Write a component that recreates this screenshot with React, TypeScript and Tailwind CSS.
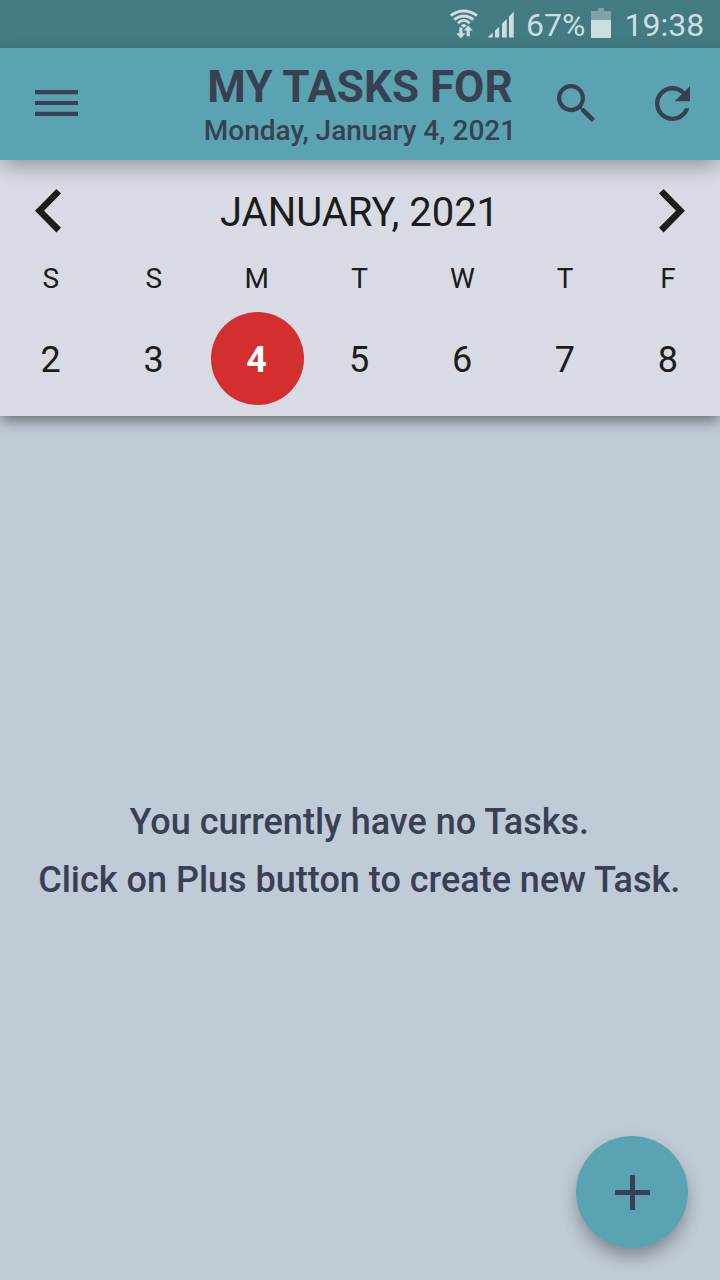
import React from "react";

const days = [
  { letter: "S", date: 2 },
  { letter: "S", date: 3 },
  { letter: "M", date: 4 },
  { letter: "T", date: 5 },
  { letter: "W", date: 6 },
  { letter: "T", date: 7 },
  { letter: "F", date: 8 },
];
const selectedDate = 4;

function WifiIcon() {
  return (
    <svg className="ml-[449px] h-[30px] w-[30px] shrink-0" viewBox="0 0 30 30" fill="none" stroke="#cddde0">
      <path d="M1.6 6.6Q14.8-2.6 28 6.6" strokeWidth="2.8" />
      <path d="M5.2 10.6Q14.8 3.4 24.4 10.6" strokeWidth="2.8" />
      <path d="M8.9 14.3Q14.8 8.6 20.7 14.3" strokeWidth="2.7" />
      <path d="M11.8 16.6Q14.8 13.6 17.8 16.6L14.8 18.8Z" fill="#cddde0" stroke="none" />
      <path d="M10.3 18.4h3.2v5.8h2.9L11.9 29.4l-4.7-5.2h3.1zM17.6 27.2h3.2v-5.6h3l-4.6-5.2-4.5 5.2h2.9z" fill="#cddde0" stroke="none" />
    </svg>
  );
}

function SignalIcon() {
  return (
    <svg className="ml-[8px] h-[28px] w-[28px] shrink-0" viewBox="0 0 28 28" fill="#cddde0">
      <path d="M.5 26.5 5.8 21.5v5zM8 19.7l4.2-4.2v11H8zM15 12.7l4.8-4.9v18.7H15zM22 5.5l4.7-5v26H22z" />
    </svg>
  );
}

function BatteryIcon() {
  return (
    <svg className="h-[30px] w-5 shrink-0" viewBox="0 0 20 30">
      <path d="M7 0h6v3h7v9H0V3h7z" fill="#7da3a9" />
      <path d="M0 12h20v18H0z" fill="#cddde0" />
    </svg>
  );
}

function StatusBar() {
  return (
    <div className="flex h-12 items-start bg-[#437b83] text-[32px] leading-[48px] text-[#cddde0]">
      <div className="pt-[9px]">
        <WifiIcon />
      </div>
      <div className="pt-[11px]">
        <SignalIcon />
      </div>
      <span className="ml-[11px] w-[65px] pt-px whitespace-nowrap">67%</span>
      <div className="pt-[8px]">
        <BatteryIcon />
      </div>
      <span className="ml-[13.5px] pt-px whitespace-nowrap">19:38</span>
    </div>
  );
}

function Header() {
  return (
    <header className="relative z-20 flex h-28 items-start bg-[#5aa4b1] text-[#394053] shadow-[0_8px_20px_-2px_rgba(0,0,0,0.32)]">
      <button className="mt-[42px] ml-[34.7px] h-[26px] w-[43.3px] shrink-0" aria-label="Menu">
        <svg className="block h-[26px] w-[43.3px]" viewBox="0 0 43.3 26" fill="currentColor">
          <path d="M0 0h43.3v4.2H0zM0 10.9h43.3v4.2H0zM0 21.8h43.3V26H0z" />
        </svg>
      </button>
      <div className="ml-[102px] flex w-[360px] flex-col items-center pt-[13px]">
        <h1 className="text-[44px] leading-[52px] font-bold whitespace-nowrap">MY TASKS FOR</h1>
        <p className="text-[28px] leading-[36px] font-medium whitespace-nowrap">Monday, January 4, 2021</p>
      </div>
      <button className="mt-9 ml-[16.6px] h-[38px] w-[38px] shrink-0" aria-label="Search">
        <svg className="block h-[38px] w-[38px]" viewBox="64 64 384 384" fill="currentColor">
          <path d="M337.509 305.372h-17.501l-6.571-5.486c20.791-25.232 33.922-57.054 33.922-93.257C347.358 127.632 283.896 64 205.135 64 127.452 64 64 127.632 64 206.629s63.452 142.628 142.225 142.628c35.011 0 67.831-13.167 92.991-34.008l6.561 5.487v17.551L415.18 448 448 415.086 337.509 305.372zm-131.284 0c-54.702 0-98.463-43.887-98.463-98.743 0-54.858 43.761-98.742 98.463-98.742 54.7 0 98.462 43.884 98.462 98.742 0 54.856-43.762 98.743-98.462 98.743z" />
        </svg>
      </button>
      <button className="mt-[38.3px] mr-[30.5px] ml-auto h-[35px] w-[35px] shrink-0" aria-label="Refresh">
        <svg className="block h-[35px] w-[35px]" viewBox="80 80 352 352" fill="currentColor">
          <path d="M256 388c-72.597 0-132-59.405-132-132 0-72.601 59.403-132 132-132 36.3 0 69.299 15.4 92.406 39.601L278 234h154V80l-51.698 51.702C348.406 99.798 304.406 80 256 80c-96.797 0-176 79.203-176 176s78.094 176 176 176c81.045 0 148.287-54.134 169.401-128H378.85c-18.745 49.561-67.138 84-122.85 84z" />
        </svg>
      </button>
    </header>
  );
}

function Calendar() {
  return (
    <section className="relative z-10 flex h-64 flex-col bg-[#d8dbe3] text-[#1c1c1c] shadow-[0_5px_14px_-1px_rgba(0,0,0,0.5)]">
      <div className="flex h-[92px] items-center justify-between px-[35.3px] pt-[10px]">
        <svg className="h-[43.4px] w-[26px]" viewBox="0 0 26 43.4" fill="currentColor">
          <path d="M21.4 0 26 4.6 9 21.7 26 38.8l-4.6 4.6L0 21.7z" />
        </svg>
        <h2 className="pt-[4px] pr-px text-[40px] leading-[48px] whitespace-nowrap">JANUARY, 2021</h2>
        <svg className="h-[43.4px] w-[26px]" viewBox="0 0 26 43.4" fill="currentColor">
          <path d="M4.6 0 0 4.6l17 17.1L0 38.8l4.6 4.6L26 21.7z" />
        </svg>
      </div>
      <div className="grid grid-cols-7 pt-[10px] text-center">
        {days.map((day, i) => (
          <div key={i} className="flex flex-col items-center">
            <span className="pr-[1px] text-[28px] leading-[34px]">{day.letter}</span>
            <span
              className={
                day.date === selectedDate
                  ? "mt-[16.4px] flex h-[93px] w-[93px] items-center justify-center rounded-full bg-[#d32f2f] pt-[2px] pr-px text-[36px] leading-none font-bold text-white"
                  : "mt-[16.4px] flex h-[93px] w-[93px] items-center justify-center pt-[2px] pr-[1.5px] text-[36px] leading-none"
              }
            >
              {day.date}
            </span>
          </div>
        ))}
      </div>
    </section>
  );
}

export default function App() {
  return (
    <div className="flex h-[1280px] w-[720px] flex-col overflow-hidden bg-[#c0cbd8] font-['Roboto',sans-serif]">
      <StatusBar />
      <Header />
      <Calendar />
      <main className="relative flex flex-1 flex-col items-center pt-[377px] pr-[1.5px] text-[36px] leading-[58px] font-medium text-[#394053]">
        <p className="whitespace-nowrap">You currently have no Tasks.</p>
        <p className="whitespace-nowrap">Click on Plus button to create new Task.</p>
        <button
          aria-label="Add task"
          className="absolute right-8 bottom-8 flex h-28 w-28 items-center justify-center rounded-full bg-[#5aa4b1] shadow-[0_11px_18px_-3px_rgba(0,0,0,0.3),0_4px_22px_0_rgba(0,0,0,0.08)]"
        >
          <svg className="h-[35px] w-[35px]" viewBox="0 0 35 35" fill="currentColor">
            <path d="M15 0h5v15h15v5H20v15h-5V20H0v-5h15z" />
          </svg>
        </button>
      </main>
    </div>
  );
}
